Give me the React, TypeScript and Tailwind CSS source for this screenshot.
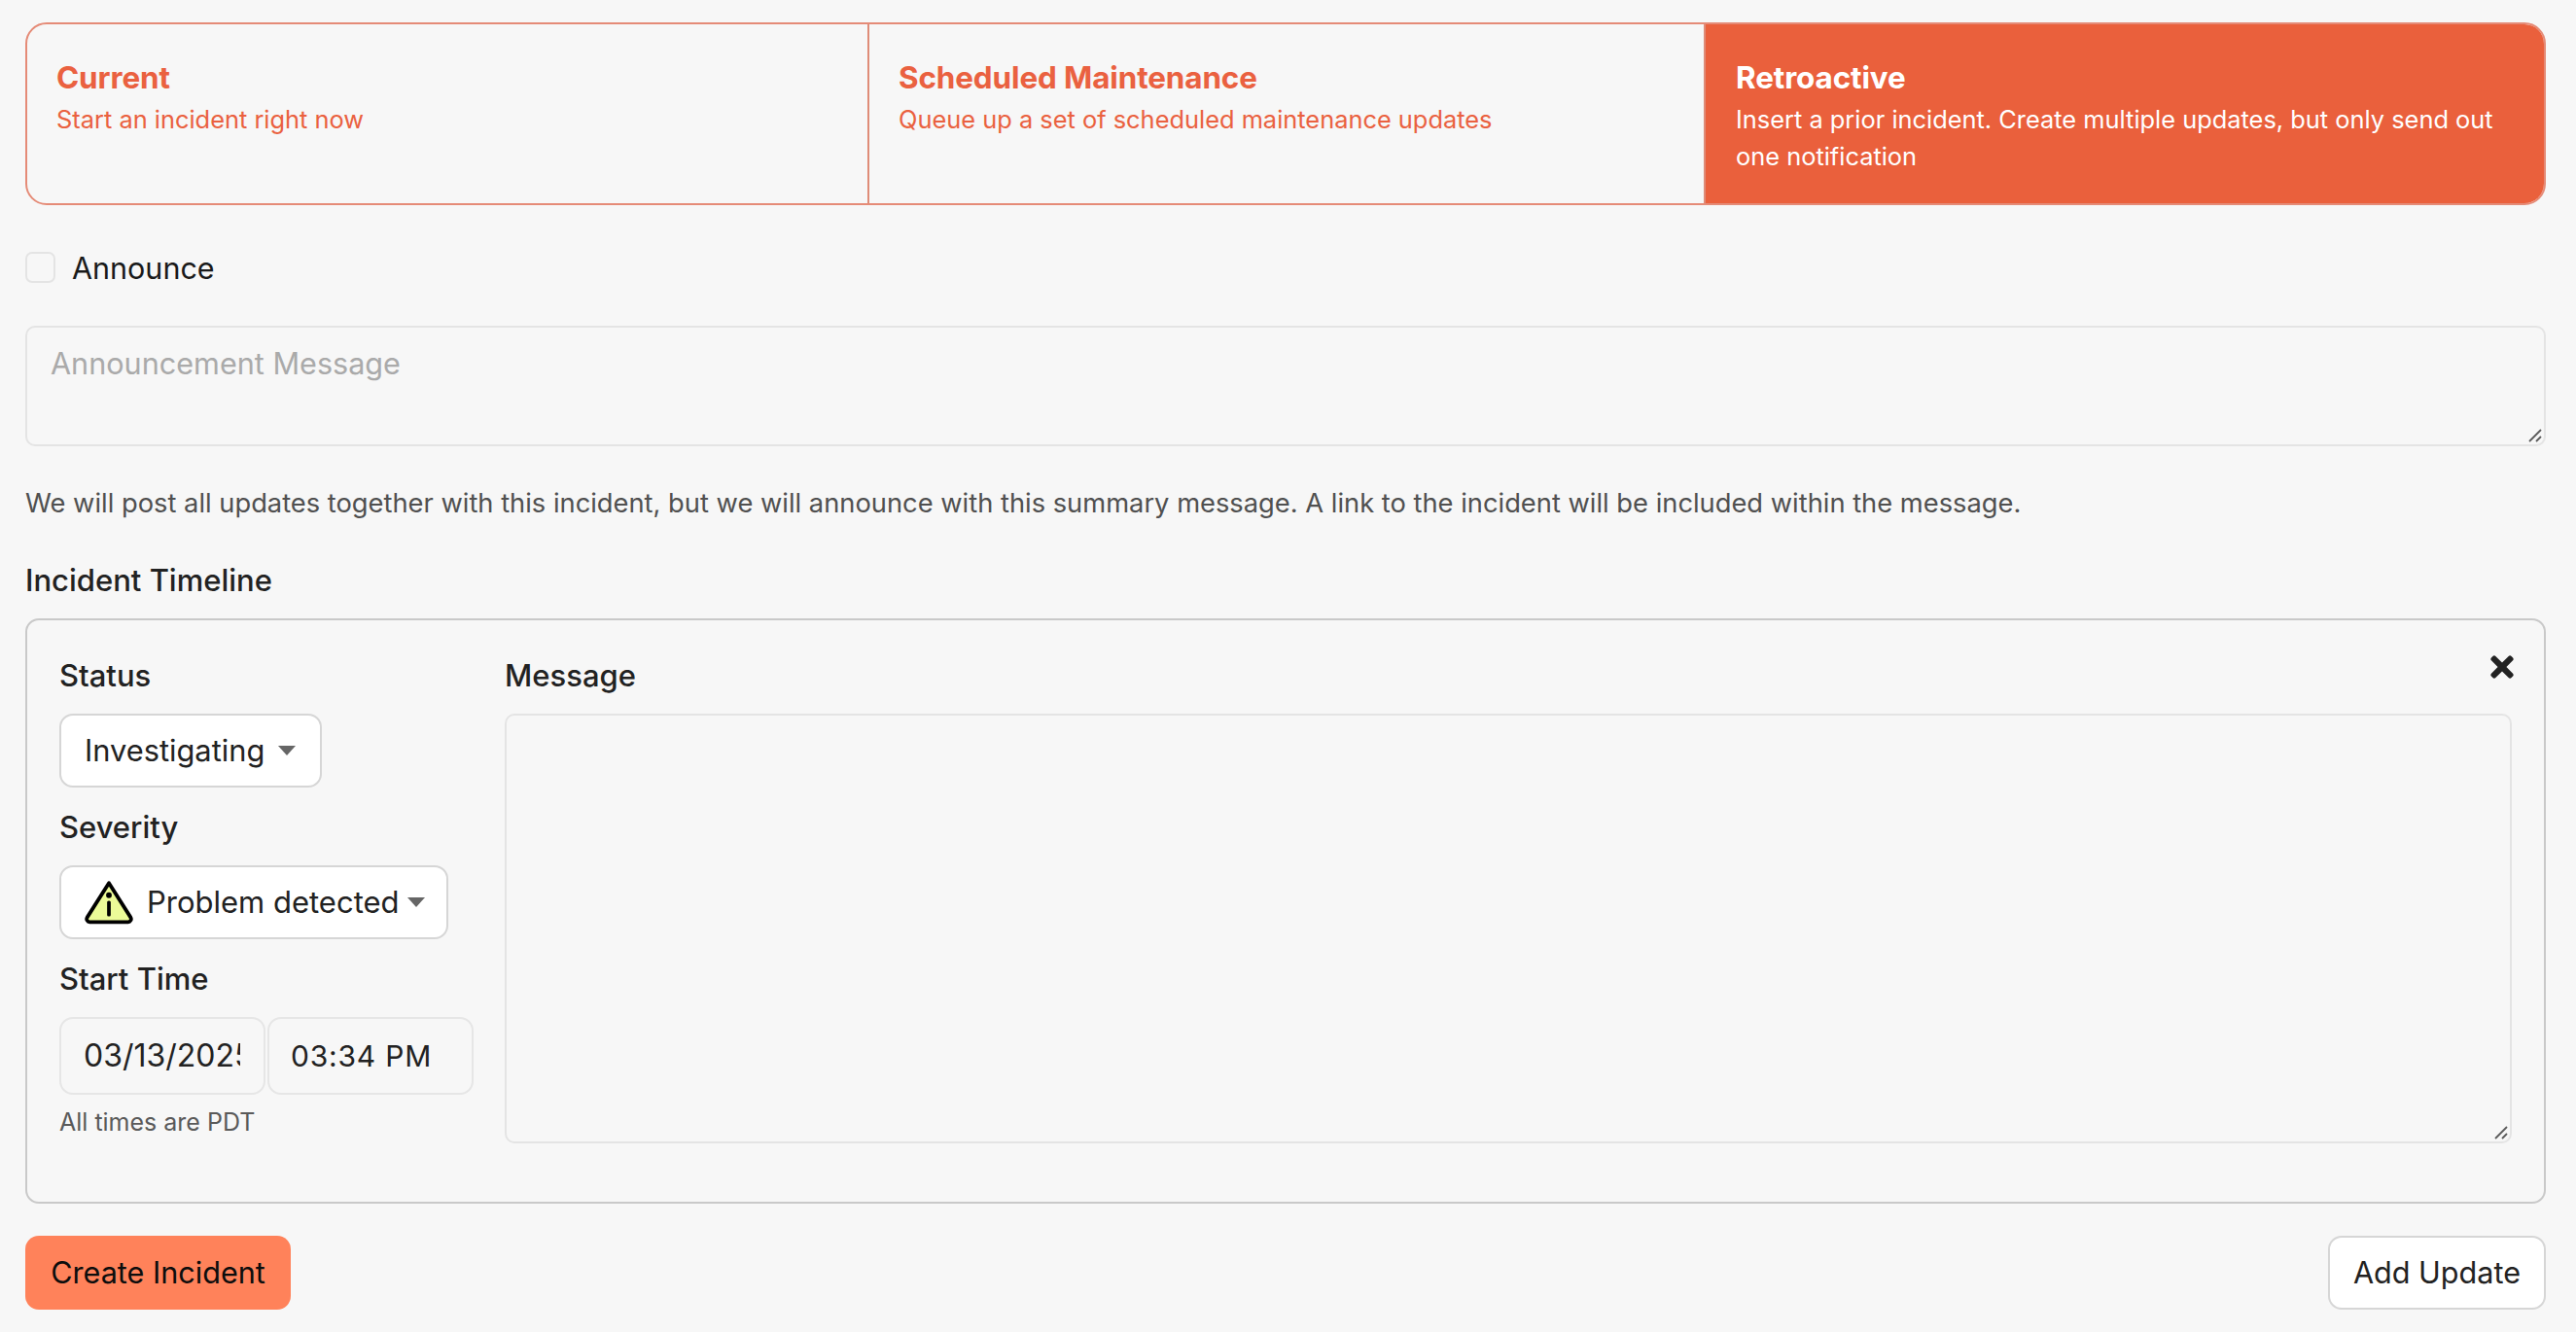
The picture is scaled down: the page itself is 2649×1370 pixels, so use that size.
import { FaTimes } from "react-icons/fa";

const Tab = ({ title, text, active, last }: { title: string; text: string; active?: boolean; last?: boolean }) => (
  <div className={`pr-[31px] pt-[35px] ${active ? "bg-[#ea603c] text-white" : "text-[#ea6140]"} ${last ? "pl-[31px]" : "pl-[30px] border-r-[2px] border-[#df8c78]"}`}>
    <div className="text-[31.4px] leading-[40px] font-bold tracking-[-0.1px]">{title}</div>
    <div className="text-[25.4px] leading-[38px] mt-[4px]">{text}</div>
  </div>
);

const Caret = () => (
  <svg width="18" height="10" viewBox="0 0 18 10" className="shrink-0">
    <path d="M0 0h18L9 10z" fill="#666" />
  </svg>
);

const Label = ({ children }: { children: string }) => (
  <div className="text-[31px] leading-[40px] font-medium text-[#222] mb-[19px]">{children}</div>
);

// textarea's drag handle, drawn so it reads like the mac one
const Grip = () => (
  <svg width="14" height="14" viewBox="0 0 14 14" className="absolute right-[4px] bottom-[4px] pointer-events-none">
    <path d="M1 13 13 1M8 13l5-5" stroke="#5c5c5c" strokeWidth="1.8" fill="none" />
  </svg>
);

export default function App() {
  return (
    <div className="min-h-screen bg-[#f7f7f7] pl-[26px] pr-[31px] pt-[23px] font-['Inter',sans-serif] text-[#222] overflow-hidden">
      <div className="grid grid-cols-[866px_860px_1fr] h-[188px] rounded-[22px] border-[2px] border-[#e58b77] overflow-hidden">
        <Tab title="Current" text="Start an incident right now" />
        <Tab title="Scheduled Maintenance" text="Queue up a set of scheduled maintenance updates" />
        <Tab title="Retroactive" text="Insert a prior incident. Create multiple updates, but only send out one notification" active last />
      </div>

      <div className="flex items-center mt-[48px] h-[32px]">
        <input type="checkbox" className="appearance-none w-[31px] h-[32px] rounded-[7px] border-[2px] border-[#e4e4e4]" />
        <span className="ml-[17px] text-[30.5px] pt-[2px] text-[#1a1a1a]">Announce</span>
      </div>

      <div className="relative mt-[44px]">
        <textarea
          placeholder="Announcement Message"
          className="block w-full h-[124px] resize-none rounded-[10px] border-[2px] border-[#e4e4e4] px-[24px] pt-[17px] text-[30.6px] leading-[40px] placeholder:text-[#aaaaaa] outline-none"
        />
        <Grip />
      </div>

      <p className="mt-[41px] text-[27.3px] leading-[36px] text-[#505050]">
        We will post all updates together with this incident, but we will announce with this summary message. A link to the incident will be included within the message.
      </p>

      <h3 className="mt-[41px] text-[31px] leading-[40px] font-medium text-[#222]">Incident Timeline</h3>

      <div className="relative mt-[19px] h-[602px] rounded-[14px] border-[2px] border-[#c9c9c9] px-[33px] pt-[37px] grid grid-cols-[425px_1fr] gap-x-[33px]">
        <div>
          <Label>Status</Label>
          <div className="flex items-center w-[270px] h-[76px] bg-white rounded-[14px] border-[2px] border-[#d6d6d6] pl-[24px] pr-[25px] justify-between text-[30.8px]">
            <span>Investigating</span>
            <Caret />
          </div>
          <div className="mt-[21px]">
            <Label>Severity</Label>
          </div>
          <div className="flex items-center w-[400px] h-[76px] bg-white rounded-[14px] border-[2px] border-[#d6d6d6] pl-[24px] pr-[25px] text-[31px]">
            <svg width="50" height="46" viewBox="0 0 48 44" className="shrink-0">
              <path d="M24 3 45.500 37a3 3 0 0 1-2.500 4.500H5A3 3 0 0 1 2.500 37z" fill="#ecfb98" stroke="#000" strokeWidth="3.600" strokeLinejoin="round" />
              <circle cx="24" cy="15" r="2.800" fill="#000" />
              <rect x="22.200" y="20.500" width="3.600" height="15.500" rx="1.500" fill="#000" />
            </svg>
            <span className="ml-[14px] whitespace-nowrap">Problem detected</span>
            <span className="ml-[8px]"><Caret /></span>
          </div>
          <div className="mt-[21px]">
            <Label>Start Time</Label>
          </div>
          <div className="flex gap-[2px]">
            <input
              readOnly
              value="03/13/2025"
              className="w-[212px] h-[80px] rounded-[14px] border-[2px] border-[#e6e6e6] pl-[23px] pr-[24px] pb-[2px] text-[32px] text-[#222] outline-none"
            />
            <input
              readOnly
              value="03:34 PM"
              className="w-[212px] h-[80px] rounded-[14px] border-[2px] border-[#e6e6e6] pl-[22px] pr-[12px] text-[30px] tracking-[0.8px] text-[#222] outline-none"
            />
          </div>
          <div className="mt-[10px] text-[25px] leading-[36px] text-[#5a5a5a]">All times are PDT</div>
        </div>
        <div>
          <Label>Message</Label>
          <div className="relative">
            <textarea className="block w-full h-[442px] resize-none rounded-[10px] border-[2px] border-[#e4e4e4] outline-none" />
            <Grip />
          </div>
        </div>
        <FaTimes className="absolute right-[31px] top-[31px] w-[24px] h-[34px] text-[#222]" />
      </div>

      <div className="flex justify-between mt-[33px]">
        <button className="h-[76px] w-[273px] rounded-[14px] bg-[#ff825a] text-[30.6px] text-[#0d0d0d]">Create Incident</button>
        <button className="h-[76px] w-[224px] rounded-[14px] bg-white border-[2px] border-[#d6d6d6] text-[30.6px] text-[#222]">Add Update</button>
      </div>
    </div>
  );
}
